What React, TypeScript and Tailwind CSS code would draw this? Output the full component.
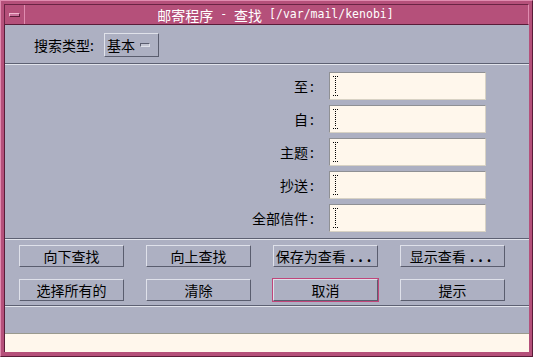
import React from "react";

const font = { fontFamily: '"Noto Sans CJK SC", "Noto Sans", sans-serif' };
const mono = { fontFamily: '"DejaVu Sans Mono", "Liberation Mono", monospace', fontSize: "11.5px" };

const Separator = () => (
  <div className="flex flex-col">
    <div className="h-px bg-[#5d6072]" />
    <div className="h-px bg-[#e2e4ec]" />
  </div>
);

const Cursor = () => (
  <svg width="5" height="20" viewBox="0 0 5 20" className="ml-[3px]">
    <path d="M0 0.5h1M2 0.5h1M4 0.5h1M0 19.5h1M2 19.5h1M4 19.5h1" stroke="#000" />
    <path d="M2.5 2v16" stroke="#000" strokeDasharray="1 1" />
  </svg>
);

const Field = ({ label }: { label: string }) => (
  <div className="flex items-center justify-end h-[28px]">
    <span className="text-[14px] text-black">{label}</span>
    <span className="text-[14px] text-black ml-[2px] mr-[15px]">:</span>
    <div className="w-[157px] h-[28px] bg-[#fff7ec] border border-t-[#8f9094] border-l-[#8f9094] border-b-[#d8d2c4] border-r-[#d8d2c4] flex items-center">
      <Cursor />
    </div>
  </div>
);

const Btn = ({ label, dots, focus }: { label: string; dots?: boolean; focus?: boolean }) => (
  <div className={focus ? "border border-[#c0457a] -m-px" : ""}>
    <div className="w-[105px] h-[22px] flex items-center justify-center text-[14px] text-black border border-t-[#dfe1ea] border-l-[#dfe1ea] border-b-[#5a5d6e] border-r-[#5a5d6e] bg-[#adb0c2]">
      {label}
      {dots && <span className="tracking-[4px] ml-[4px] font-bold">...</span>}
    </div>
  </div>
);

export default function App() {
  return (
    <div style={font} className="w-[533px] h-[357px] bg-[#b5507a] flex flex-col border-l border-t border-[#e08cb0] border-r border-b border-r-[#5a1c38] border-b-[#5a1c38] pl-[3px] pt-[3px] pr-[3px] pb-[4px]">
      {/* title bar */}
      <div className="flex h-[21px] border border-[#6a2444] border-r-[#e08cb0] border-b-[#5a1c38]">
        <div className="w-[20px] h-full flex items-center justify-center border-r border-[#e08cb0]">
          <div className="w-[11px] h-[4px] border border-t-[#f2b8d0] border-l-[#f2b8d0] border-b-[#5a1c38] border-r-[#5a1c38] bg-[#c9709a]" />
        </div>
        <div className="flex-1 flex items-center justify-center text-white text-[14px] leading-none pr-[2px] whitespace-pre">
          <span>邮寄程序</span>
          <span style={mono}> - </span>
          <span>查找</span>
          <span style={mono}> [/var/mail/kenobi]</span>
        </div>
      </div>

      {/* body */}
      <div className="flex-1 flex flex-col bg-[#adb0c2] border-l border-[#5a1c38]">
        <div className="h-[38px] flex items-center pl-[29px] pt-[2px]">
          <span className="text-[14px] text-black">搜索类型:</span>
          <div className="ml-[10px] w-[55px] h-[24px] flex items-center border border-t-[#e0e2ea] border-l-[#e0e2ea] border-b-[#5a5d6e] border-r-[#5a5d6e]">
            <span className="text-[14px] text-black ml-[2px]">基本</span>
            <div className="ml-[5px] w-[10px] h-[4px] border border-t-[#5a5d6e] border-l-[#5a5d6e] border-b-[#e0e2ea] border-r-[#e0e2ea] bg-[#c4c6d3]" />
          </div>
        </div>
        <Separator />
        <div className="flex flex-col gap-[5px] pt-[7px] pb-[6px] pr-[43px]">
          <Field label="至" />
          <Field label="自" />
          <Field label="主题" />
          <Field label="抄送" />
          <Field label="全部信件" />
        </div>
        <Separator />
        <div className="grid grid-cols-[repeat(4,105px)] gap-x-[22px] gap-y-[12px] pl-[14px] pt-[5px] pb-[4px]">
          <Btn label="向下查找" />
          <Btn label="向上查找" />
          <Btn label="保存为查看" dots />
          <Btn label="显示查看" dots />
          <Btn label="选择所有的" />
          <Btn label="清除" />
          <Btn label="取消" focus />
          <Btn label="提示" />
        </div>
        <Separator />
        <div className="flex-1" />
        <div className="h-px bg-[#9a9a8e]" />
        <div className="h-[18px] bg-[#fff7ec]" />
      </div>
    </div>
  );
}
